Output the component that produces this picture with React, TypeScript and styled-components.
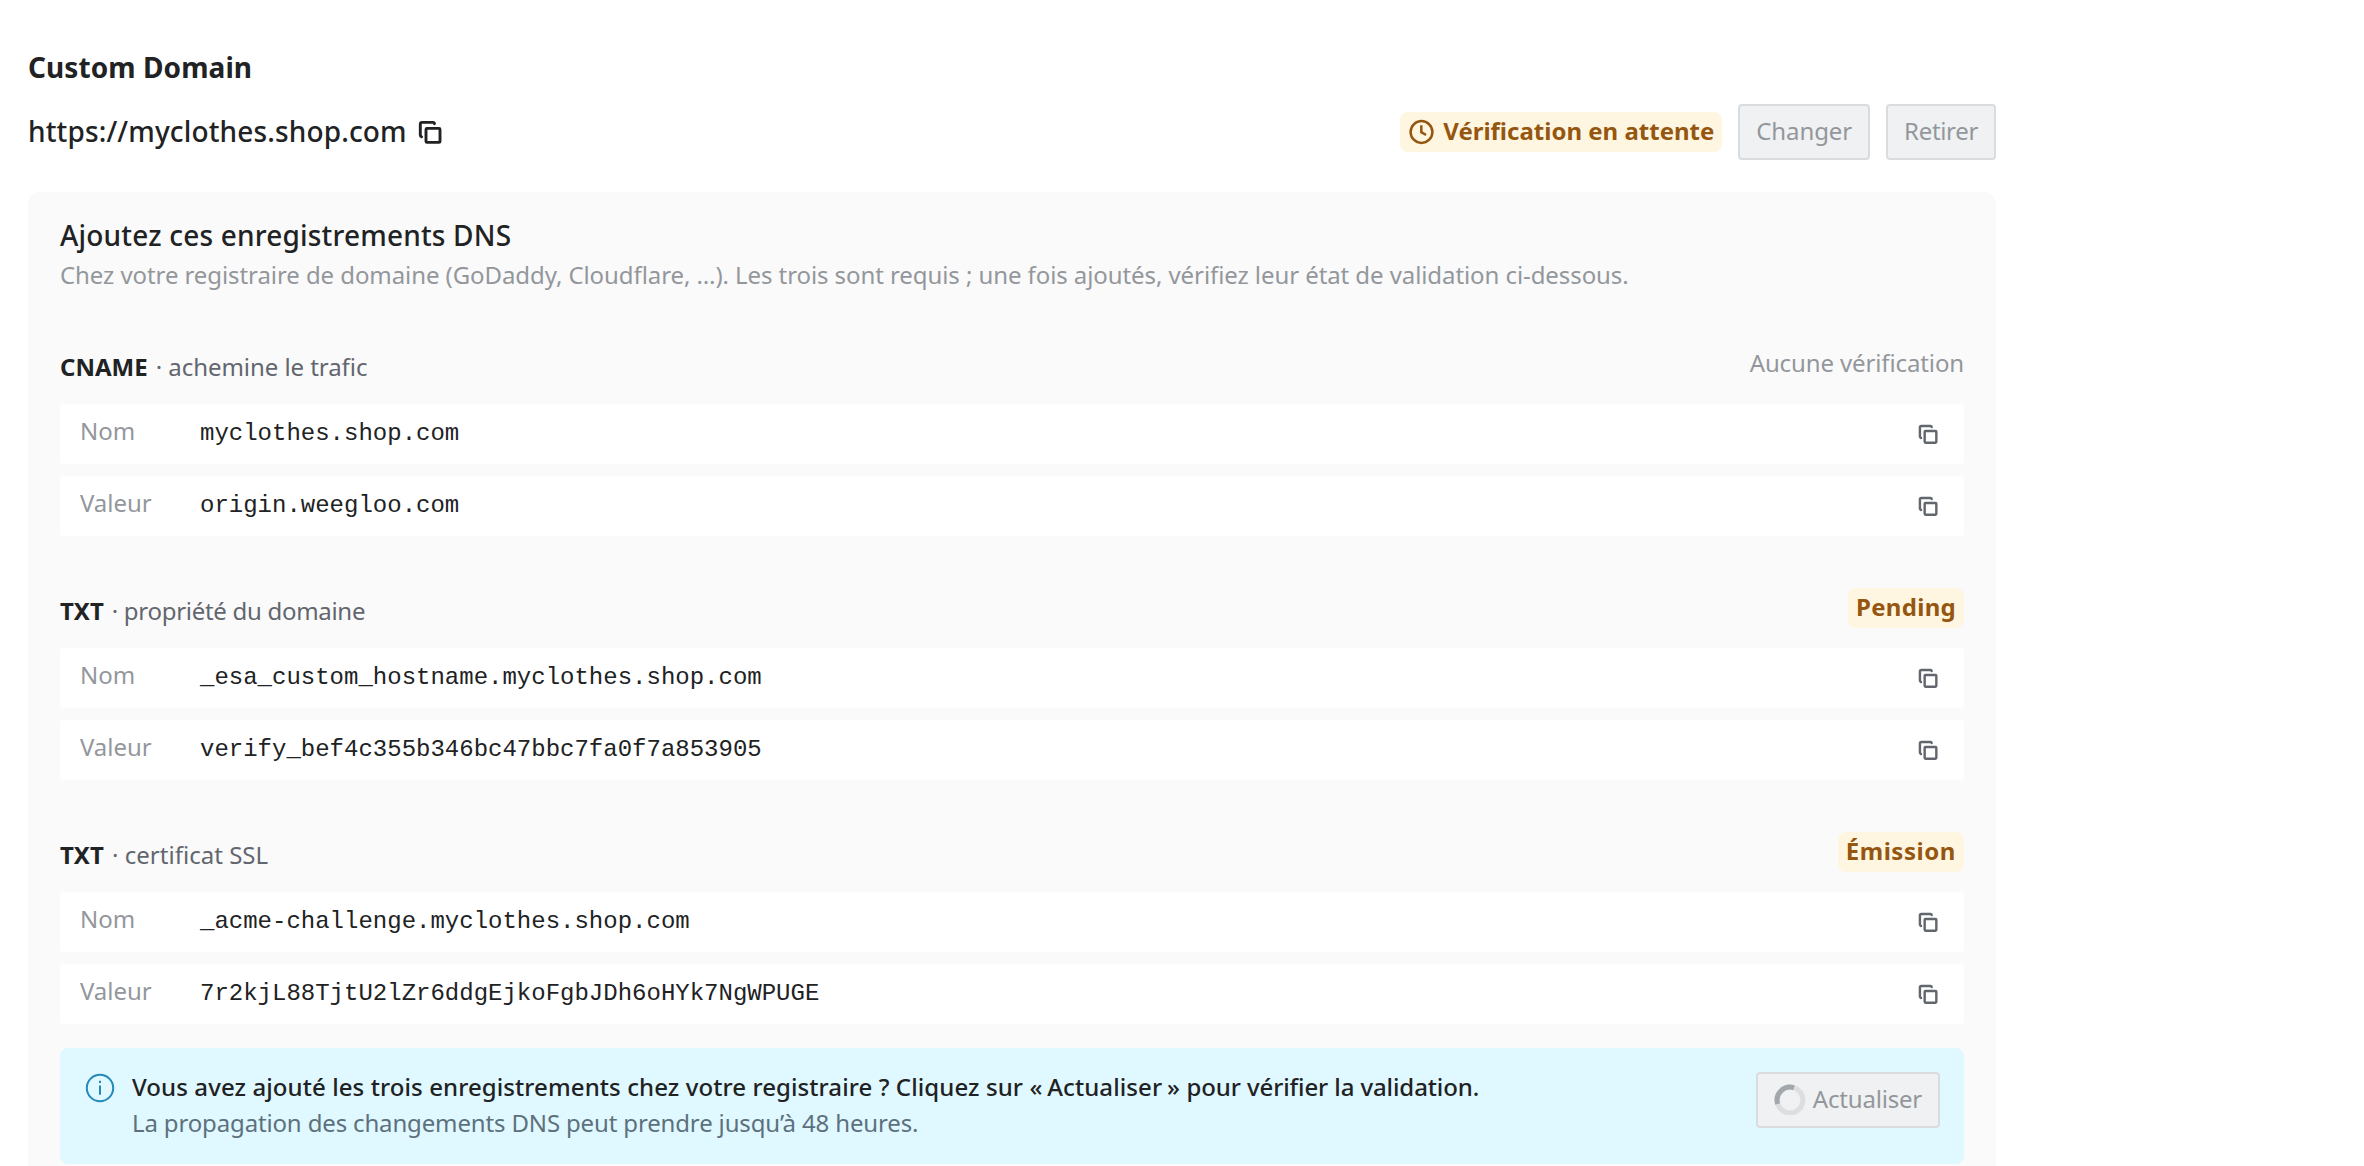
import React from "react";
import styled, { createGlobalStyle } from "styled-components";

const ink = "#202224";
const muted = "#93979c";
const subtle = "#62666e";
const amber = "#955710";

const GlobalStyle = createGlobalStyle`
  html, body { margin: 0; background: #fff; }
  * { box-sizing: border-box; }
  body {
    height: 1166px;
    overflow: hidden;
    color: ${ink};
    font: 400 24px/36px "Noto Sans", sans-serif;
    white-space: nowrap;
  }
`;

const Page = styled.main`
  width: 2024px;
  padding: 48px 28px 0;
`;

const Title = styled.h1`
  margin: 0;
  font-size: 28px;
  font-weight: 700;
  letter-spacing: 0.08px;
  line-height: 38px;
`;

const DomainBar = styled.div`
  display: flex;
  align-items: center;
  justify-content: space-between;
  height: 56px;
  margin-top: 18px;
`;

const DomainLink = styled.div`
  display: flex;
  align-items: center;
  gap: 11px;
  font-size: 28px;
  font-weight: 500;
  letter-spacing: 0.14px;
  line-height: 38px;
`;

const DomainText = styled.span`
  padding-bottom: 2px;
`;

const Actions = styled.div`
  display: flex;
  align-items: center;
  gap: 16px;
`;

const Pill = styled.span<{ $tracking?: number }>`
  display: inline-flex;
  align-items: center;
  gap: 9px;
  height: 40px;
  padding: 0 8px;
  border-radius: 8px;
  background: #fff6e2;
  color: ${amber};
  font-weight: 700;
  letter-spacing: ${(p) => p.$tracking ?? 0}px;
  line-height: 38px;
`;

const PillText = styled.span`
  padding-bottom: 2px;
`;

const Button = styled.button<{ $tracking?: number }>`
  display: inline-flex;
  align-items: center;
  justify-content: center;
  gap: 7px;
  height: 56px;
  padding: 0 16px 2px;
  border: 2px solid #d9dcde;
  border-radius: 4px;
  background: #eff1f2;
  color: ${muted};
  font: 400 24px/36px "Noto Sans", sans-serif;
  letter-spacing: ${(p) => p.$tracking ?? -0.2}px;
`;

const Panel = styled.section`
  margin-top: 32px;
  padding: 24px 32px 32px;
  height: 1010px;
  border-radius: 12px;
  background: #fafafa;
`;

const PanelTitle = styled.h2`
  margin: 0;
  font-size: 28px;
  font-weight: 500;
  letter-spacing: 0.19px;
  line-height: 38px;
`;

const PanelText = styled.p`
  margin: 3px 0 0;
  color: ${muted};
  letter-spacing: -0.08px;
`;

const Records = styled.div`
  display: grid;
  gap: 52px;
  margin-top: 51px;
`;

const RecordHead = styled.header`
  display: flex;
  justify-content: space-between;
  height: 40px;
  margin-bottom: 20px;
`;

const RecordName = styled.div<{ $tracking: number }>`
  padding-top: 5px;
  color: ${subtle};
  letter-spacing: ${(p) => p.$tracking}px;
`;

const RecordType = styled.strong`
  margin-right: 2px;
  color: ${ink};
  font-weight: 700;
  letter-spacing: 0;
`;

const NoCheck = styled.span`
  padding-top: 1px;
  color: ${muted};
  letter-spacing: -0.12px;
`;

const Fields = styled.div`
  display: grid;
  gap: 12px;
`;

const Field = styled.div`
  display: flex;
  align-items: center;
  height: 60px;
  padding: 0 26px 0 20px;
  border-radius: 4px;
  background: #fff;
`;

const FieldLabel = styled.span`
  width: 120px;
  padding-bottom: 6px;
  color: ${muted};
  letter-spacing: -0.05px;
`;

const FieldValue = styled.code`
  flex: 1;
  font: 400 24px/36px "Liberation Mono", monospace;
`;

const Alert = styled.aside`
  display: flex;
  align-items: flex-start;
  height: 116px;
  margin-top: 24px;
  padding: 20px 24px;
  border-radius: 8px;
  background: #e0f8ff;
`;

const AlertBody = styled.div`
  flex: 1;
  margin-left: 17px;
  padding-top: 1px;
`;

const AlertTitle = styled.div`
  font-weight: 500;
  letter-spacing: 0.09px;
`;

const Quoted = styled.span`
  word-spacing: -1.5px;
`;

const TitleEnd = styled.span`
  letter-spacing: -0.1px;
`;

const AlertText = styled.div`
  color: #5d717d;
  letter-spacing: -0.15px;
`;

const AlertIcon = styled.svg`
  margin: 5px 0 0 1px;
`;

const AlertAction = styled.div`
  padding-top: 4px;
`;

const CopyIcon = ({ size, color }: { size: number; color: string }) => (
  <svg width={size} height={size} viewBox="0 0 24 24" fill="none" stroke={color} strokeWidth="2.9" strokeLinejoin="round" strokeLinecap="round">
    <rect x="8" y="8.4" width="14" height="14" rx="1" />
    <path d="M3.6 16.8 C2.8 16.5 2.3 15.9 2.3 15 V4.2 Q2.3 2.4 4.1 2.4 H14.8 Q16.4 2.4 16.4 3.7" />
  </svg>
);

const ClockIcon = () => (
  <svg width="26" height="26" viewBox="0 0 26 26" fill="none" stroke={amber} strokeWidth="2.5">
    <circle cx="13.5" cy="13" r="10.9" />
    <path d="M13.3 6.2 V13.2 L18.1 16" />
  </svg>
);

const Spinner = () => (
  <svg width="32" height="32" viewBox="0 0 32 32" fill="none" strokeWidth="5">
    <circle cx="16" cy="17" r="12.9" stroke="#dcdee0" />
    <path d="M3.7 21 A12.9 12.9 0 0 1 20 4.8" stroke="#a2a7ac" />
  </svg>
);

const InfoIcon = () => (
  <AlertIcon width="30" height="30" viewBox="0 0 30 30" fill="none" stroke="#2389b8" strokeWidth="2">
    <circle cx="15" cy="15" r="13.2" />
    <path d="M15 12.5 V21.8 M15 7.8 V10" />
  </AlertIcon>
);

const records = [
  {
    type: "CNAME",
    purpose: "achemine le trafic",
    purposeTracking: -0.06,
    status: null,
    statusTracking: 0,
    name: "myclothes.shop.com",
    value: "origin.weegloo.com",
  },
  {
    type: "TXT",
    purpose: "propriété du domaine",
    purposeTracking: -0.29,
    status: "Pending",
    statusTracking: 0.3,
    name: "_esa_custom_hostname.myclothes.shop.com",
    value: "verify_bef4c355b346bc47bbc7fa0f7a853905",
  },
  {
    type: "TXT",
    purpose: "certificat SSL",
    purposeTracking: 0.02,
    status: "Émission",
    statusTracking: 0.55,
    name: "_acme-challenge.myclothes.shop.com",
    value: "7r2kjL88TjtU2lZr6ddgEjkoFgbJDh6oHYk7NgWPUGE",
  },
];

const CopyField = ({ label, value }: { label: string; value: string }) => (
  <Field>
    <FieldLabel>{label}</FieldLabel>
    <FieldValue>{value}</FieldValue>
    <CopyIcon size={20} color={subtle} />
  </Field>
);

export default function App() {
  return (
    <Page>
      <GlobalStyle />
      <Title>Custom Domain</Title>
      <DomainBar>
        <DomainLink>
          <DomainText>https://myclothes.shop.com</DomainText>
          <CopyIcon size={24} color={ink} />
        </DomainLink>
        <Actions>
          <Pill>
            <ClockIcon />
            <PillText>Vérification en attente</PillText>
          </Pill>
          <Button $tracking={-0.1}>Changer</Button>
          <Button $tracking={-0.33}>Retirer</Button>
        </Actions>
      </DomainBar>
      <Panel>
        <PanelTitle>Ajoutez ces enregistrements DNS</PanelTitle>
        <PanelText>
          Chez votre registraire de domaine (GoDaddy, Cloudflare, …). Les trois sont requis ; une fois ajoutés, vérifiez leur état de validation ci-dessous.
        </PanelText>
        <Records>
          {records.map((r) => (
            <article key={r.name}>
              <RecordHead>
                <RecordName $tracking={r.purposeTracking}>
                  <RecordType>{r.type}</RecordType> · {r.purpose}
                </RecordName>
                {r.status ? (
                  <Pill $tracking={r.statusTracking}>
                    <PillText>{r.status}</PillText>
                  </Pill>
                ) : (
                  <NoCheck>Aucune vérification</NoCheck>
                )}
              </RecordHead>
              <Fields>
                <CopyField label="Nom" value={r.name} />
                <CopyField label="Valeur" value={r.value} />
              </Fields>
            </article>
          ))}
        </Records>
        <Alert>
          <InfoIcon />
          <AlertBody>
            <AlertTitle>
              Vous avez ajouté les trois enregistrements chez votre registraire ? Cliquez sur <Quoted>« Actualiser »</Quoted>{" "}
              <TitleEnd>pour vérifier la validation.</TitleEnd>
            </AlertTitle>
            <AlertText>La propagation des changements DNS peut prendre jusqu’à 48 heures.</AlertText>
          </AlertBody>
          <AlertAction>
            <Button>
              <Spinner />
              Actualiser
            </Button>
          </AlertAction>
        </Alert>
      </Panel>
    </Page>
  );
}
